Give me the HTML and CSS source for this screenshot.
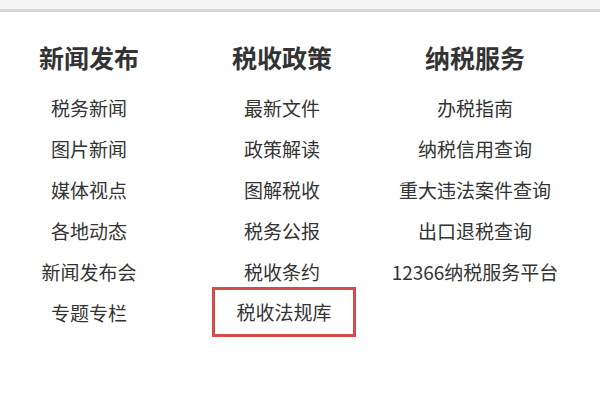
FILE: index.html
```html
<!DOCTYPE html>
<html>
<head>
<meta charset="utf-8">
<link rel="stylesheet" href="styles.css">
</head>
<body>
<div class="topbar"></div>
<div class="cols">
  <div class="col">
    <h2 class="title">新闻发布</h2>
    <ul class="list">
      <li>税务新闻</li>
      <li>图片新闻</li>
      <li>媒体视点</li>
      <li>各地动态</li>
      <li>新闻发布会</li>
      <li>专题专栏</li>
    </ul>
  </div>
  <div class="col">
    <h2 class="title">税收政策</h2>
    <ul class="list">
      <li>最新文件</li>
      <li>政策解读</li>
      <li>图解税收</li>
      <li>税务公报</li>
      <li>税收条约</li>
      <li><span class="mark">税收法规库</span></li>
    </ul>
  </div>
  <div class="col">
    <h2 class="title">纳税服务</h2>
    <ul class="list">
      <li>办税指南</li>
      <li>纳税信用查询</li>
      <li>重大违法案件查询</li>
      <li>出口退税查询</li>
      <li>12366纳税服务平台</li>
    </ul>
  </div>
</div>
</body>
</html>
```

FILE: styles.css
```css
html, body {
  margin: 0;
  padding: 0;
  background: #fff;
}
body {
  width: 600px;
  height: 400px;
  overflow: hidden;
  font-family: "Microsoft YaHei", "Noto Sans CJK SC", "Noto Sans", sans-serif;
  color: #333;
}
.topbar {
  height: 9px;
  background: #f5f5f5;
  border-bottom: 3px solid #d5d5d5;
}
.cols {
  display: grid;
  grid-template-columns: 170px 170px 170px;
  column-gap: 23px;
  padding-left: 4px;
  padding-top: 29px;
}
.col {
  text-align: center;
}
.title {
  margin: 0;
  font-size: 25px;
  font-weight: bold;
  line-height: 32px;
  color: #333;
}
.list {
  list-style: none;
  margin: 14px 0 0 0;
  padding: 0;
}
.list li {
  font-size: 19px;
  line-height: 41px;
  height: 41px;
  color: #333;
}
.mark {
  display: inline-block;
  vertical-align: top;
  margin-top: -5px;
  margin-left: 4px;
  line-height: 44px;
  padding: 0 21px;
  border: 3px solid #d24c4c;
}
```
